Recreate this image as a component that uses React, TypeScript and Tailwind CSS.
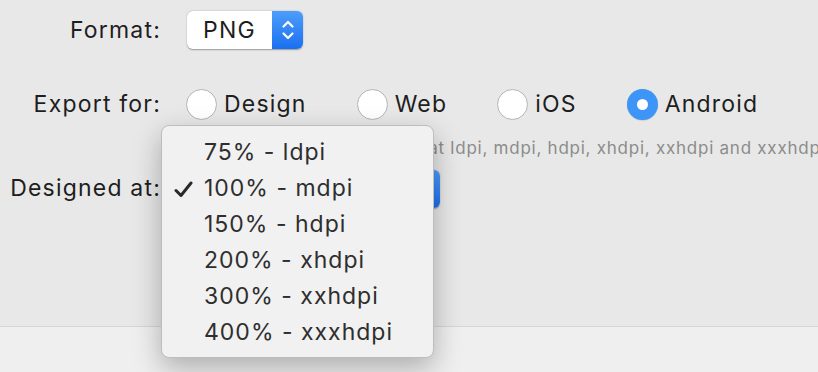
import React from "react";

const font = { fontFamily: "Inter, 'Liberation Sans', sans-serif" };

function Stepper({ width, label }: { width: string; label?: string }) {
    return (
        <div className={`flex h-[38px] ${width} rounded-[6px] bg-white shadow-[0_0.5px_1.5px_rgba(0,0,0,0.35)] overflow-hidden`}>
            <div className="flex-1 flex items-center justify-center text-[23px] tracking-[1.2px] text-[#1e1e1e]">{label}</div>
            <div className="w-[31px] flex items-center justify-center bg-gradient-to-b from-[#4d9dfb] to-[#1a6ff0]">
                <svg width="14" height="24" viewBox="0 0 14 24" fill="none" stroke="white" strokeWidth="2.2" strokeLinecap="round" strokeLinejoin="round">
                    <path d="M2.5 8.5 L7 4 L11.5 8.5" />
                    <path d="M2.5 15.5 L7 20 L11.5 15.5" />
                </svg>
            </div>
        </div>
    );
}

function Radio({ label, on }: { label: string; on?: boolean }) {
    return (
        <div className="flex items-center gap-[7px]">
            {on ? (
                <div className="w-[31px] h-[31px] rounded-full bg-[#3d95f7] flex items-center justify-center shadow-[0_0.5px_1px_rgba(0,0,0,0.2)]">
                    <div className="w-[11px] h-[11px] rounded-full bg-white" />
                </div>
            ) : (
                <div className="w-[31px] h-[31px] rounded-full bg-white border border-[#b4b4b4]" />
            )}
            <span className="text-[23px] tracking-[1.2px] text-[#1e1e1e]">{label}</span>
        </div>
    );
}

const scales = ["75% - ldpi", "100% - mdpi", "150% - hdpi", "200% - xhdpi", "300% - xxhdpi", "400% - xxxhdpi"];

export default function App() {
    return (
        <div style={font} className="relative w-[818px] h-[372px] bg-[#e8e8e8] overflow-hidden flex flex-col">
            <div className="h-[326px] pt-[11px]">
                <div className="grid grid-cols-[161px_1fr] gap-x-[26px] items-center">
                    <span className="text-right text-[23px] tracking-[1.2px] text-[#1e1e1e]">Format:</span>
                    <Stepper width="w-[116px]" label="PNG" />
                </div>
                <div className="grid grid-cols-[161px_1fr] gap-x-[25px] items-center mt-[38px]">
                    <span className="text-right text-[23px] tracking-[1.2px] text-[#1e1e1e]">Export for:</span>
                    <div className="flex items-center gap-[50px]">
                        <Radio label="Design" />
                        <Radio label="Web" />
                        <Radio label="iOS" />
                        <Radio label="Android" on />
                    </div>
                </div>
                <div className="ml-[205px] mt-[16px] text-[17px] tracking-[0.75px] leading-[20px] text-[#8c8c8c] whitespace-nowrap">
                    Sketch will export assets at ldpi, mdpi, hdpi, xhdpi, xxhdpi and xxxhdpi
                </div>
                <div className="grid grid-cols-[161px_1fr] gap-x-[26px] items-center mt-[12px]">
                    <span className="text-right text-[23px] tracking-[1.2px] text-[#1e1e1e]">Designed at:</span>
                    <Stepper width="w-[253px]" label="100% - mdpi" />
                </div>
            </div>
            <div className="flex-1 border-t border-[#d6d6d6] bg-[#efefef]" />

            <div className="absolute left-[161px] top-[125px] w-[273px] h-[233px] rounded-[8px] border border-[#bdbdbd] bg-[#f1f1f1] shadow-[0_10px_28px_rgba(0,0,0,0.28)] pt-[8px]">
                {scales.map((s) => (
                    <div key={s} className="relative h-[36px] flex items-center pl-[42px] text-[23px] tracking-[1px] text-[#2e2e2e]">
                        {s === "100% - mdpi" && (
                            <svg className="absolute left-[12px] top-[11px]" width="19" height="17" viewBox="0 0 19 17" fill="none" stroke="#2a2a2a" strokeWidth="3" strokeLinecap="round" strokeLinejoin="round">
                                <path d="M2 9.5 L7 14.5 L17 2" />
                            </svg>
                        )}
                        {s}
                    </div>
                ))}
            </div>
        </div>
    );
}
